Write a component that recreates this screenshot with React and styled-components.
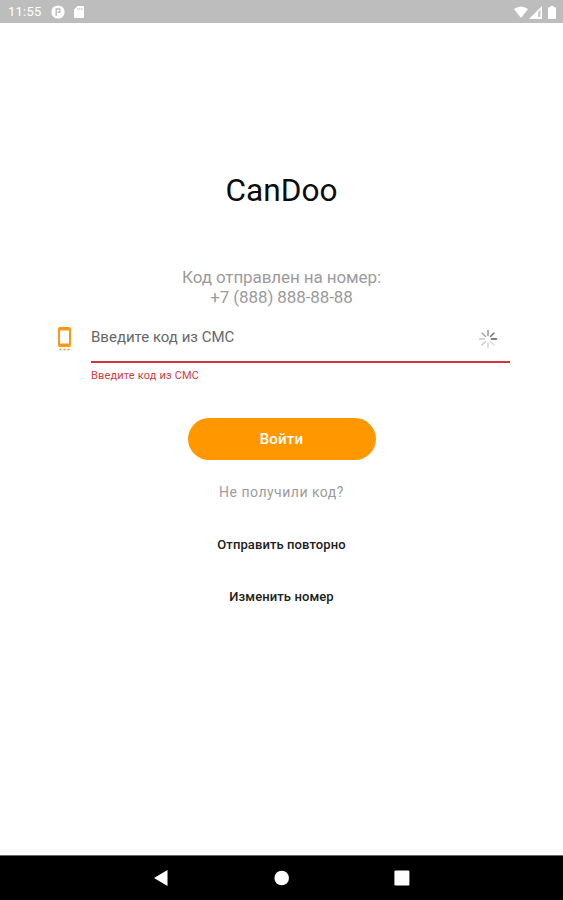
import React from 'react';
import styled, { createGlobalStyle } from 'styled-components';

const GlobalStyle = createGlobalStyle`
  body {
    margin: 0;
    background-color: #fff;
    font-family: Roboto, "Liberation Sans", sans-serif;
  }
`
const Screen = styled.div`
  display: flex;
  flex-direction: column;
  width: 563px;
  height: 900px;
  overflow: hidden;
`
const StatusBar = styled.header`
  display: flex;
  align-items: center;
  justify-content: space-between;
  box-sizing: border-box;
  height: 23px;
  padding: 1px 7px 0 8px;
  background-color: #bdbdbd;
  color: #fff;
  flex-shrink: 0;
`
const StatusGroup = styled.div`
  display: flex;
  align-items: center;
  gap: ${props => props.gap};
`
const Time = styled.span`
  font-size: 13px;
  line-height: 22px;
  letter-spacing: 0.25px;
`
const Content = styled.main`
  display: flex;
  flex: 1;
  flex-direction: column;
  align-items: center;
`
const Title = styled.h1`
  margin: 148px 0 0;
  font-size: 31.6px;
  font-weight: 400;
  line-height: 40px;
  color: #0c0c0c;
`
const SentTo = styled.p`
  margin: 56px 0 0;
  font-size: 17px;
  line-height: 20px;
  letter-spacing: -0.1px;
  text-align: center;
  color: #9b9b9b;
`
const Field = styled.div`
  display: flex;
  align-self: stretch;
  margin: 10px 53px 0 58px;
`
const PhoneColumn = styled.div`
  width: 33px;
  padding-top: 10px;
`
const FieldBody = styled.div`
  flex: 1;
`
const InputRow = styled.div`
  display: flex;
  justify-content: space-between;
  box-sizing: border-box;
  height: 46px;
  padding: 10px 12px 0 0;
  border-bottom: 2px solid #d1343a;
`
const Placeholder = styled.span`
  font-size: 15px;
  line-height: 20px;
  color: #686868;
`
const SpinnerSlot = styled.div`
  padding-top: 2px;
`
const ErrorText = styled.div`
  margin-top: 5px;
  font-size: 11px;
  line-height: 16px;
  letter-spacing: 0.17px;
  color: #d23c42;
`
const SubmitButton = styled.button`
  width: 188px;
  height: 42px;
  margin-top: 34px;
  padding: 0;
  border: none;
  border-radius: 21px;
  background-color: #ff9800;
  color: #fff;
  font-family: inherit;
  font-size: 15px;
  font-weight: 500;
  letter-spacing: 0.2px;
`
const Hint = styled.p`
  margin: 22px 0 0;
  font-size: 14px;
  line-height: 20px;
  letter-spacing: 0.5px;
  color: #9c9c9c;
`
const TextButton = styled.button`
  height: 20px;
  margin-top: ${props => props.top};
  padding: 0;
  border: none;
  background: none;
  color: #202020;
  font-family: inherit;
  font-size: 13px;
  font-weight: 500;
  line-height: 20px;
  letter-spacing: 0.1px;
`
const NavBar = styled.nav`
  display: flex;
  align-items: center;
  justify-content: center;
  gap: 104px;
  box-sizing: border-box;
  height: 45px;
  border-top: 1px solid #666;
  background-color: #000;
  flex-shrink: 0;
`
const Icon = styled.svg`
  display: block;
  flex-shrink: 0;
`

// starts at the right and goes clockwise
const colors = ['#555', '#ddd', '#d8d8d8', '#ccc', '#c6c6c6', '#aaa', '#999', '#777']

const Spinner = () => (
  <Icon width="20" height="20" viewBox="0 0 20 20">
    {colors.map((color, i) => (
      <path
        key={color}
        d="M13.5 10H18.5"
        stroke={color}
        strokeWidth="1.5"
        strokeLinecap="round"
        transform={`rotate(${i * 45} 10 10)`}
      />
    ))}
  </Icon>
)

const App = () => (
  <Screen>
    <GlobalStyle />
    <StatusBar>
      <StatusGroup gap="9px">
        <Time>11:55</Time>
        <Icon width="14" height="14" viewBox="0 0 14 14">
          <circle cx="7" cy="7" r="6.6" fill="#fff" />
          <path d="M5.2 11V4H8.8V7.3H6.5" fill="none" stroke="#bdbdbd" strokeWidth="1.5" />
        </Icon>
        <Icon width="10" height="12" viewBox="0 0 10 12">
          <path d="M3.5 0H9Q10 0 10 1V11Q10 12 9 12H1Q0 12 0 11V3.5Z" fill="#fff" />
          <path d="M3.8 2V4M5.8 2V4M7.8 2V4" stroke="#bdbdbd" strokeWidth="0.8" />
        </Icon>
      </StatusGroup>
      <StatusGroup gap="1px">
        <Icon width="14" height="12" viewBox="0 0 14 12">
          <path d="M0 3Q7-2 14 3L7 12Z" fill="#fff" />
        </Icon>
        <Icon width="13" height="13" viewBox="0 0 13 13">
          <path d="M0 13L13 0V13Z" fill="#fff" />
          <path d="M9 6L11.5 3.5V11H9Z" fill="#bdbdbd" opacity="0.8" />
        </Icon>
        <Icon width="13" height="13" viewBox="0 0 13 13">
          <path d="M6 1.2H7.5V0H10.5V1.2H12Q13 1.2 13 2.2V12Q13 13 12 13H6Q5 13 5 12V2.2Q5 1.2 6 1.2Z" fill="#fff" />
        </Icon>
      </StatusGroup>
    </StatusBar>
    <Content>
      <Title>CanDoo</Title>
      <SentTo>
        Код отправлен на номер:<br />
        +7 (888) 888-88-88
      </SentTo>
      <Field>
        <PhoneColumn>
          <Icon width="13" height="24" viewBox="0 0 13 24">
            <path
              fillRule="evenodd"
              d="M2 0H11Q13 0 13 2V18Q13 20 11 20H2Q0 20 0 18V2Q0 0 2 0ZM2 3.5V16.5H11V3.5Z"
              fill="#fb9716"
            />
            <path d="M1.5 22.5H3.5M5.5 22.5H7.5M9.5 22.5H11.5" stroke="#fb9716" strokeWidth="1.6" />
          </Icon>
        </PhoneColumn>
        <FieldBody>
          <InputRow>
            <Placeholder>Введите код из СМС</Placeholder>
            <SpinnerSlot>
              <Spinner />
            </SpinnerSlot>
          </InputRow>
          <ErrorText>Введите код из СМС</ErrorText>
        </FieldBody>
      </Field>
      <SubmitButton>Войти</SubmitButton>
      <Hint>Не получили код?</Hint>
      <TextButton top="33px">Отправить повторно</TextButton>
      <TextButton top="32px">Изменить номер</TextButton>
    </Content>
    <NavBar>
      <Icon width="16" height="16" viewBox="0 0 16 16">
        <path d="M0 8L13.5 0V16Z" fill="#fff" />
      </Icon>
      <Icon width="16" height="16" viewBox="0 0 16 16">
        <circle cx="7.7" cy="8" r="7.3" fill="#fff" />
      </Icon>
      <Icon width="16" height="16" viewBox="0 0 16 16">
        <rect x="0.4" y="0.5" width="15" height="15" rx="1.2" fill="#fff" />
      </Icon>
    </NavBar>
  </Screen>
)

export default App;
